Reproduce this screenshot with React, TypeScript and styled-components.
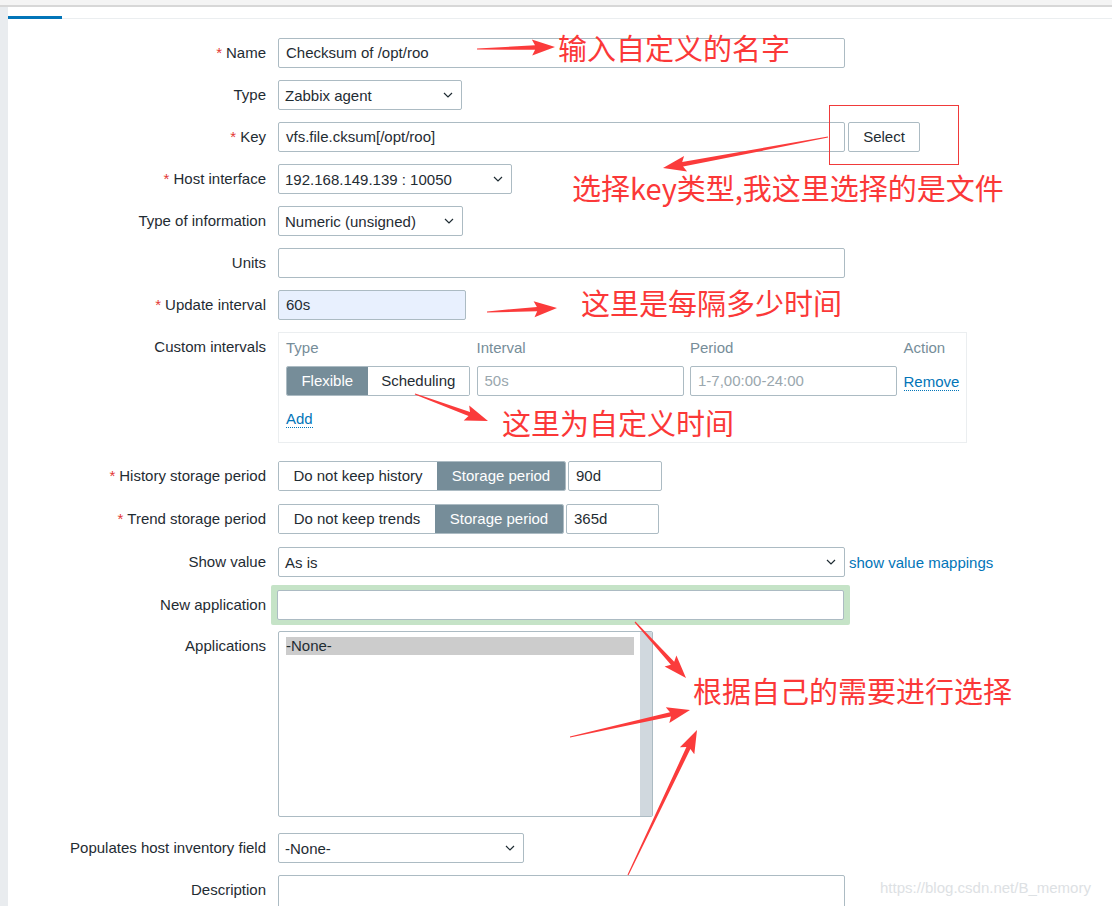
import React from 'react'
import styled, { createGlobalStyle } from 'styled-components'

const GlobalStyle = createGlobalStyle`
  html, body {
    margin: 0;
    padding: 0;
    overflow: hidden;
    background: #ffffff;
  }
  body {
    font-family: "Liberation Sans", Arial, sans-serif;
    font-size: 15px;
    color: #1f2c33;
  }
`

const Page = styled.div`
  position: relative;
  width: 1112px;
  height: 906px;
  overflow: hidden;
`

const TopBar = styled.div`
  height: 5px;
  background: #f4f4f4;
  border-bottom: 2px solid #d7d7d7;
`

const Shell = styled.div`
  display: flex;
  height: 899px;
`

const SideStrip = styled.div`
  width: 8px;
  background: #e9ecef;
  flex-shrink: 0;
`

const Main = styled.div`
  flex: 1;
`

const TabStrip = styled.div`
  height: 11px;
  display: flex;
  align-items: flex-end;
  border-bottom: 1px solid #ebeef0;
`

const ActiveTab = styled.div`
  width: 54px;
  height: 3px;
  margin-bottom: -1px;
  background: #0275b8;
`

const Form = styled.div`
  padding-top: 19px;
  display: flex;
  flex-direction: column;
`

const Row = styled.div<{ $gap?: number }>`
  display: grid;
  grid-template-columns: 258px 1fr;
  column-gap: 12px;
  align-items: start;
  margin-top: ${(p) => (p.$gap ?? 12)}px;
`

const Label = styled.div<{ $lh?: number }>`
  text-align: right;
  line-height: ${(p) => p.$lh ?? 30}px;
  white-space: nowrap;
`

const Required = styled.span`
  color: #e33734;
  margin-right: 4px;
`

const Field = styled.div<{ $gap?: number }>`
  display: flex;
  align-items: center;
  gap: ${(p) => p.$gap ?? 3}px;
`

const TextBox = styled.div<{ $w: number; $fill?: boolean; $muted?: boolean }>`
  box-sizing: border-box;
  width: ${(p) => p.$w}px;
  height: 30px;
  line-height: 28px;
  padding: 0 7px;
  border: 1px solid #acbbc3;
  border-radius: 2px;
  background: ${(p) => (p.$fill ? '#e8f0fe' : '#ffffff')};
  color: ${(p) => (p.$muted ? '#9aa7ae' : '#1f2c33')};
  white-space: nowrap;
  overflow: hidden;
`

const SelectBox = styled.div<{ $w: number }>`
  box-sizing: border-box;
  width: ${(p) => p.$w}px;
  height: 30px;
  padding: 0 8px 0 6px;
  border: 1px solid #acbbc3;
  border-radius: 2px;
  display: flex;
  align-items: center;
  justify-content: space-between;
  background: #ffffff;
  white-space: nowrap;
`

const Button = styled.div`
  box-sizing: border-box;
  width: 72px;
  height: 30px;
  line-height: 28px;
  text-align: center;
  border: 1px solid #acbbc3;
  border-radius: 2px;
  background: #ffffff;
  color: #1f2c33;
`

const Segmented = styled.div`
  display: flex;
  border: 1px solid #acbbc3;
  border-radius: 2px;
  overflow: hidden;
  height: 30px;
  box-sizing: border-box;
`

const Segment = styled.div<{ $active?: boolean; $w: number }>`
  width: ${(p) => p.$w}px;
  line-height: 28px;
  text-align: center;
  background: ${(p) => (p.$active ? '#768d99' : '#ffffff')};
  color: ${(p) => (p.$active ? '#ffffff' : '#1f2c33')};
  white-space: nowrap;
`

const IntervalBox = styled.div`
  box-sizing: border-box;
  width: 689px;
  height: 111px;
  border: 1px solid #ebeef0;
  padding: 5px 7px 13px;
`

const IntervalGrid = styled.div`
  display: grid;
  grid-template-columns: 184px 207px 207px auto;
  column-gap: 6.5px;
  row-gap: 8px;
  align-items: center;
`

const ColHead = styled.div`
  line-height: 20px;
  color: #768d99;
`

const Link = styled.span`
  color: #0275b8;
  border-bottom: 1px dotted #0275b8;
  line-height: 16px;
`

const PlainLink = styled.span`
  color: #0275b8;
`

const AddRow = styled.div`
  margin-top: 13px;
  line-height: 20px;
`

const Highlight = styled.div`
  width: 567px;
  padding: 5px 6px;
  margin-left: -7px;
  background: #c5e3c7;
  border-radius: 2px;
`

const ListBox = styled.div`
  box-sizing: border-box;
  width: 375px;
  height: 186px;
  border: 1px solid #acbbc3;
  border-radius: 2px;
  display: flex;
  overflow: hidden;
`

const ListItems = styled.div`
  flex: 1;
  padding: 5px 6px 0 7px;
`

const ListOption = styled.div<{ $selected?: boolean }>`
  height: 18px;
  line-height: 18px;
  background: ${(p) => (p.$selected ? '#cccccc' : 'transparent')};
`

const ScrollTrack = styled.div`
  width: 12px;
  background: #d0d8de;
`

const TextArea = styled.div`
  box-sizing: border-box;
  width: 567px;
  height: 60px;
  border: 1px solid #acbbc3;
  border-radius: 2px;
`

const Overlay = styled.svg`
  position: absolute;
  left: 0;
  top: 0;
  pointer-events: none;
`

// red hand-written notes laid over the screenshot
const Note = styled.div<{ $x: number; $y: number }>`
  position: absolute;
  left: ${(p) => p.$x}px;
  top: ${(p) => p.$y - 17}px;
  font-family: "Noto Sans CJK SC", "Liberation Sans", sans-serif;
  font-size: 29px;
  line-height: 30px;
  color: #fb3838;
  white-space: nowrap;
  pointer-events: none;
`

const Watermark = styled.div`
  position: absolute;
  left: 880px;
  top: 879px;
  font-family: "Liberation Sans", Arial, sans-serif;
  font-size: 15px;
  color: #dde1e4;
  white-space: nowrap;
`

const Chevron = () => (
  <svg width="10" height="6" viewBox="0 0 10 6">
    <polyline points="1,1 5,5 9,1" fill="none" stroke="#1f2c33" strokeWidth="1.2" />
  </svg>
)

function arrowPoints(x1: number, y1: number, x2: number, y2: number) {
  const dx = x2 - x1
  const dy = y2 - y1
  const len = Math.hypot(dx, dy)
  const ux = dx / len
  const uy = dy / len
  const nx = -uy
  const ny = ux
  const head = 20
  const bx = x2 - ux * head
  const by = y2 - uy * head
  const hx = bx - ux * 3
  const hy = by - uy * 3
  const pts = [
    [x1 + nx * 0.6, y1 + ny * 0.6],
    [bx + nx * 2.2, by + ny * 2.2],
    [hx + nx * 8, hy + ny * 8],
    [x2, y2],
    [hx - nx * 8, hy - ny * 8],
    [bx - nx * 2.2, by - ny * 2.2],
    [x1 - nx * 0.6, y1 - ny * 0.6],
  ]
  return pts.map(([a, b]) => `${a.toFixed(1)},${b.toFixed(1)}`).join(' ')
}

const arrows = [
  [477, 49, 555, 47],
  [828, 137, 663, 168],
  [487, 312, 557, 308],
  [415, 394, 488, 421],
  [635, 622, 686, 678],
  [570, 737, 690, 710],
  [628, 875, 697, 730],
]

function App() {
  return (
    <Page>
      <GlobalStyle />
      <TopBar />
      <Shell>
        <SideStrip />
        <Main>
          <TabStrip>
            <ActiveTab />
          </TabStrip>
          <Form>
            <Row $gap={0}>
              <Label><Required>*</Required>Name</Label>
              <TextBox $w={567}>Checksum of /opt/roo</TextBox>
            </Row>
            <Row>
              <Label>Type</Label>
              <SelectBox $w={184}>Zabbix agent<Chevron /></SelectBox>
            </Row>
            <Row>
              <Label><Required>*</Required>Key</Label>
              <Field>
                <TextBox $w={567}>vfs.file.cksum[/opt/roo]</TextBox>
                <Button>Select</Button>
              </Field>
            </Row>
            <Row>
              <Label><Required>*</Required>Host interface</Label>
              <SelectBox $w={234}>192.168.149.139 : 10050<Chevron /></SelectBox>
            </Row>
            <Row>
              <Label>Type of information</Label>
              <SelectBox $w={185}>Numeric (unsigned)<Chevron /></SelectBox>
            </Row>
            <Row>
              <Label>Units</Label>
              <TextBox $w={567} />
            </Row>
            <Row>
              <Label><Required>*</Required>Update interval</Label>
              <TextBox $w={188} $fill>60s</TextBox>
            </Row>
            <Row>
              <Label>Custom intervals</Label>
              <IntervalBox>
                <IntervalGrid>
                  <ColHead>Type</ColHead>
                  <ColHead>Interval</ColHead>
                  <ColHead>Period</ColHead>
                  <ColHead>Action</ColHead>
                  <Segmented>
                    <Segment $w={81} $active>Flexible</Segment>
                    <Segment $w={102}>Scheduling</Segment>
                  </Segmented>
                  <TextBox $w={207} $muted>50s</TextBox>
                  <TextBox $w={207} $muted>1-7,00:00-24:00</TextBox>
                  <div><Link>Remove</Link></div>
                </IntervalGrid>
                <AddRow><Link>Add</Link></AddRow>
              </IntervalBox>
            </Row>
            <Row $gap={18}>
              <Label><Required>*</Required>History storage period</Label>
              <Field $gap={2}>
                <Segmented>
                  <Segment $w={158}>Do not keep history</Segment>
                  <Segment $w={128} $active>Storage period</Segment>
                </Segmented>
                <TextBox $w={94}>90d</TextBox>
              </Field>
            </Row>
            <Row $gap={13}>
              <Label><Required>*</Required>Trend storage period</Label>
              <Field $gap={2}>
                <Segmented>
                  <Segment $w={156}>Do not keep trends</Segment>
                  <Segment $w={128} $active>Storage period</Segment>
                </Segmented>
                <TextBox $w={93}>365d</TextBox>
              </Field>
            </Row>
            <Row $gap={13}>
              <Label>Show value</Label>
              <Field $gap={4}>
                <SelectBox $w={567}>As is<Chevron /></SelectBox>
                <PlainLink>show value mappings</PlainLink>
              </Field>
            </Row>
            <Row $gap={8}>
              <Label $lh={39}>New application</Label>
              <Highlight>
                <TextBox $w={567} />
              </Highlight>
            </Row>
            <Row $gap={6}>
              <Label>Applications</Label>
              <ListBox>
                <ListItems>
                  <ListOption $selected>-None-</ListOption>
                </ListItems>
                <ScrollTrack />
              </ListBox>
            </Row>
            <Row $gap={16}>
              <Label>Populates host inventory field</Label>
              <SelectBox $w={246}>-None-<Chevron /></SelectBox>
            </Row>
            <Row $gap={12}>
              <Label>Description</Label>
              <TextArea />
            </Row>
          </Form>
        </Main>
      </Shell>

      <Overlay width={1112} height={906} viewBox="0 0 1112 906">
        <rect x={829.5} y={105.5} width={129} height={59} fill="none" stroke="#f03a3a" strokeWidth={1} />
        {arrows.map(([a, b, c, d], i) => (
          <polygon key={i} points={arrowPoints(a, b, c, d)} fill="#fb3b3b" />
        ))}
      </Overlay>
      <Note $x={558} $y={49}>输入自定义的名字</Note>
      <Note $x={572} $y={189}>选择key类型,我这里选择的是文件</Note>
      <Note $x={581} $y={304}>这里是每隔多少时间</Note>
      <Note $x={502} $y={424}>这里为自定义时间</Note>
      <Note $x={693} $y={692}>根据自己的需要进行选择</Note>
      <Watermark>https://blog.csdn.net/B_memory</Watermark>
    </Page>
  )
}

export default App
